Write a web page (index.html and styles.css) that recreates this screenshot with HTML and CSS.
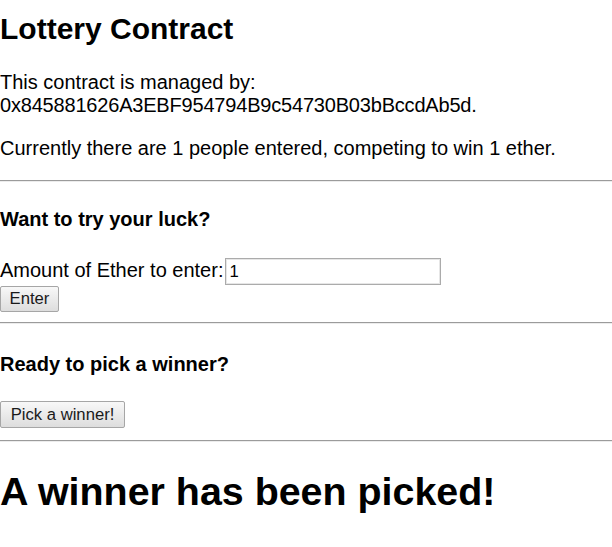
FILE: index.html
```html
<!DOCTYPE html>
<html>
<head>
<meta charset="utf-8">
<link rel="stylesheet" href="styles.css">
</head>
<body>
<div class="app">
  <h2 class="title">Lottery Contract</h2>
  <p class="text">This contract is managed by:<br><span class="address">0x845881626A3EBF954794B9c54730B03bBccdAb5d.</span></p>
  <p class="text">Currently there are 1 people entered, competing to win 1 ether.</p>
  <hr class="rule">
  <form class="form">
    <h4 class="subtitle subtitle-enter">Want to try your luck?</h4>
    <div class="field">
      <label class="label">Amount of Ether to enter:</label><input class="input" value="1">
    </div>
    <button class="btn btn-enter" type="button">Enter</button>
  </form>
  <hr class="rule">
  <h4 class="subtitle subtitle-pick">Ready to pick a winner?</h4>
  <button class="btn btn-pick" type="button">Pick a winner!</button>
  <hr class="rule">
  <h1 class="message">A winner has been picked!</h1>
</div>
</body>
</html>
```
FILE: styles.css
```css
html, body {
  margin: 0;
  padding: 0;
  background: #fff;
}
body {
  font-family: "Liberation Sans", Arial, sans-serif;
  color: #000;
}
.app {
  width: 612px;
}
.title {
  font-size: 30px;
  line-height: 34px;
  font-weight: bold;
  margin: 12px 0 25px;
}
.text {
  font-size: 20px;
  line-height: 23px;
  margin: 0 0 20px;
}
.address {
  letter-spacing: -0.19px;
}
.rule {
  margin: 0;
  height: 0;
  border: 0;
  border-top: 1px solid #9b9b9b;
  border-bottom: 1px solid #ececec;
}
.form {
  margin: 0;
}
.subtitle {
  font-size: 20px;
  line-height: 23px;
  font-weight: bold;
}
.subtitle-enter {
  margin: 26px 0 27px;
}
.subtitle-pick {
  margin: 29px 0 25px;
}
.field {
  display: flex;
  align-items: baseline;
  font-size: 20px;
  line-height: 23px;
}
.input {
  box-sizing: border-box;
  width: 216px;
  height: 27px;
  border: 1px solid #ababab;
  box-shadow: inset 0 0 0 1px #e6e6e6;
  padding: 0 3px;
  font-family: "Liberation Sans", Arial, sans-serif;
  font-size: 16.67px;
  color: #000;
  margin: 0 0 0 2px;
  outline: none;
}
.btn {
  display: block;
  box-sizing: border-box;
  height: 26px;
  font-family: "Liberation Sans", Arial, sans-serif;
  font-size: 16.67px;
  line-height: 18px;
  padding: 0 8px;
  border: 1px solid #a6a6a6;
  border-radius: 2px;
  background: linear-gradient(#f8f8f8, #dddddd);
  color: #1a1a1a;
}
.btn-enter {
  width: 59px;
  margin: 1px 0 10px;
}
.btn-pick {
  width: 125px;
  height: 27px;
  margin: 0 0 12px;
}
.message {
  font-size: 39.4px;
  line-height: 46px;
  font-weight: bold;
  margin: 26px 0 0;
}
```
